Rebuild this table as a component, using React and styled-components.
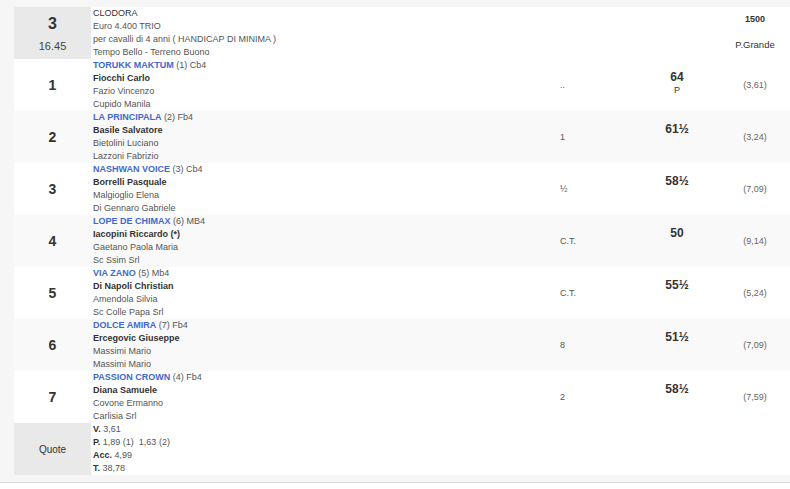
import React from "react";
import styled, { createGlobalStyle } from "styled-components";

const GlobalStyle = createGlobalStyle`
    html, body {
        margin: 0;
        padding: 0;
        background: #f6f6f6;
        font-family: "Liberation Sans", Arial, sans-serif;
        color: #333;
    }
`;

const runners = [
    { pos: "1", horse: "TORUKK MAKTUM", info: "(1) Cb4", jockey: "Fiocchi Carlo", trainer: "Fazio Vincenzo", owner: "Cupido Manila", dist: "..", weight: "64", extra: "P", odds: "(3,61)" },
    { pos: "2", horse: "LA PRINCIPALA", info: "(2) Fb4", jockey: "Basile Salvatore", trainer: "Bietolini Luciano", owner: "Lazzoni Fabrizio", dist: "1", weight: "61½", odds: "(3,24)" },
    { pos: "3", horse: "NASHWAN VOICE", info: "(3) Cb4", jockey: "Borrelli Pasquale", trainer: "Malgioglio Elena", owner: "Di Gennaro Gabriele", dist: "½", weight: "58½", odds: "(7,09)" },
    { pos: "4", horse: "LOPE DE CHIMAX", info: "(6) MB4", jockey: "Iacopini Riccardo (*)", trainer: "Gaetano Paola Maria", owner: "Sc Ssim Srl", dist: "C.T.", weight: "50", odds: "(9,14)" },
    { pos: "5", horse: "VIA ZANO", info: "(5) Mb4", jockey: "Di Napoli Christian", trainer: "Amendola Silvia", owner: "Sc Colle Papa Srl", dist: "C.T.", weight: "55½", odds: "(5,24)" },
    { pos: "6", horse: "DOLCE AMIRA", info: "(7) Fb4", jockey: "Ercegovic Giuseppe", trainer: "Massimi Mario", owner: "Massimi Mario", dist: "8", weight: "51½", odds: "(7,09)" },
    { pos: "7", horse: "PASSION CROWN", info: "(4) Fb4", jockey: "Diana Samuele", trainer: "Covone Ermanno", owner: "Carlisia Srl", dist: "2", weight: "58½", odds: "(7,59)" },
];

const App = () => {
    return (
        <Page>
            <GlobalStyle />
            <Table>
                <colgroup>
                    <col style={{ width: 77 }} />
                    <col style={{ width: 467 }} />
                    <col style={{ width: 76 }} />
                    <col style={{ width: 86 }} />
                    <col style={{ width: 70 }} />
                </colgroup>
                <tbody>
                    <Row>
                        <GrayCell>
                            <RaceNo>3</RaceNo>
                            <RaceTime>16.45</RaceTime>
                        </GrayCell>
                        <InfoCell colSpan={3}>
                            <Line $dark>CLODORA</Line>
                            <Line>Euro 4.400 TRIO</Line>
                            <Line>per cavalli di 4 anni ( HANDICAP DI MINIMA )</Line>
                            <Line>Tempo Bello - Terreno Buono</Line>
                        </InfoCell>
                        <HeadRight>
                            <Distance>1500</Distance>
                            <Track>P.Grande</Track>
                        </HeadRight>
                    </Row>
                    {runners.map((r, i) => (
                        <Row key={r.pos} $alt={i % 2 === 1}>
                            <PosCell>{r.pos}</PosCell>
                            <InfoCell>
                                <Line><Horse>{r.horse}</Horse> {r.info}</Line>
                                <Line $strong>{r.jockey}</Line>
                                <Line>{r.trainer}</Line>
                                <Line>{r.owner}</Line>
                            </InfoCell>
                            <DistCell>{r.dist}</DistCell>
                            <WeightCell>
                                <Weight>{r.weight}</Weight>
                                {r.extra && <WeightNote>{r.extra}</WeightNote>}
                            </WeightCell>
                            <OddsCell>{r.odds}</OddsCell>
                        </Row>
                    ))}
                    <Row>
                        <GrayCell><QuoteLabel>Quote</QuoteLabel></GrayCell>
                        <InfoCell colSpan={4}>
                            <Line><b>V.</b> 3,61</Line>
                            <Line><b>P.</b> 1,89 (1)&nbsp; 1,63 (2)</Line>
                            <Line><b>Acc.</b> 4,99</Line>
                            <Line><b>T.</b> 38,78</Line>
                        </InfoCell>
                    </Row>
                </tbody>
            </Table>
            <Footer />
        </Page>
    );
};
export default App;

const Page = styled.div`
    padding-top: 7px;
    padding-left: 14px;
    height: 489px;
    box-sizing: border-box;
    display: flex;
    flex-direction: column;
`;

const Footer = styled.div`
    margin-left: -14px;
    margin-top: auto;
    height: 6px;
    background: #fff;
    border-top: 1px solid #dcdcdc;
`;

const Table = styled.table`
    width: 776px;
    border-collapse: collapse;
    table-layout: fixed;
    font-size: 9px;
`;

const Row = styled.tr`
    height: 52px;
    background: ${(p) => (p.$alt ? "#f9f9f9" : "#fff")};
`;

const GrayCell = styled.td`
    background: #e9e9e9;
    text-align: center;
    vertical-align: middle;
    padding: 0;
`;

const RaceNo = styled.div`
    font-size: 16px;
    font-weight: bold;
    color: #333;
    line-height: 20px;
`;

const RaceTime = styled.div`
    font-size: 11px;
    color: #444;
    margin-top: 6px;
`;

const QuoteLabel = styled.div`
    font-size: 10px;
    color: #333;
`;

const PosCell = styled.td`
    text-align: center;
    vertical-align: middle;
    font-size: 14px;
    font-weight: bold;
    color: #333;
    padding: 0;
`;

const InfoCell = styled.td`
    vertical-align: top;
    padding: 0 0 0 2px;
`;

const Line = styled.div`
    height: 13px;
    line-height: 13px;
    white-space: nowrap;
    color: ${(p) => (p.$strong || p.$dark ? "#333" : "#555")};
    font-weight: ${(p) => (p.$strong ? "bold" : "normal")};
    b {
        color: #333;
    }
`;

const Horse = styled.span`
    color: #4169c9;
    font-weight: bold;
`;

const DistCell = styled.td`
    vertical-align: middle;
    padding: 0 0 0 2px;
    color: #555;
`;

const WeightCell = styled.td`
    vertical-align: top;
    text-align: center;
    padding-top: 11px;
`;

const Weight = styled.div`
    font-size: 12px;
    font-weight: bold;
    color: #333;
    line-height: 14px;
`;

const WeightNote = styled.div`
    font-size: 9px;
    color: #333;
    line-height: 12px;
`;

const OddsCell = styled.td`
    vertical-align: middle;
    text-align: center;
    color: #666;
`;

const HeadRight = styled.td`
    vertical-align: top;
    text-align: center;
    padding-top: 6px;
`;

const Distance = styled.div`
    font-weight: bold;
    color: #333;
    line-height: 12px;
`;

const Track = styled.div`
    color: #333;
    margin-top: 14px;
    font-size: 9.5px;
`;
